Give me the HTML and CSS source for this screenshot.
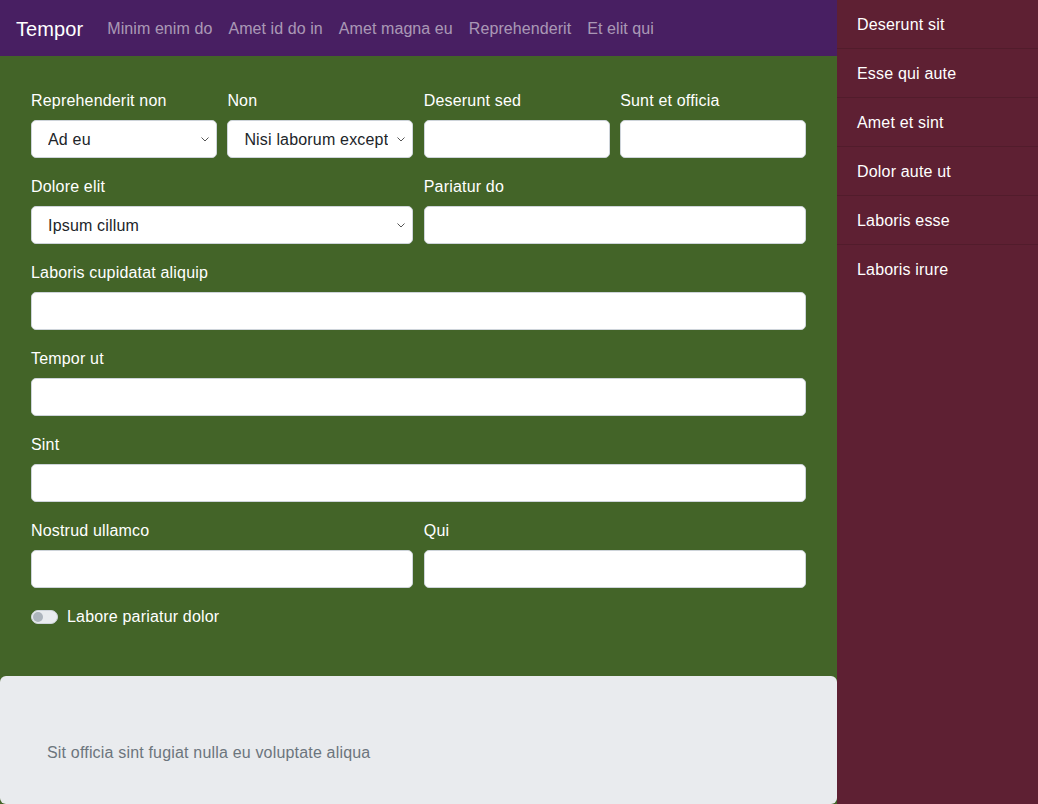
FILE: index.html
```html
<!DOCTYPE html>
<html lang="en">
<head>
<meta charset="utf-8">
<title>Tempor</title>
<link rel="stylesheet" href="styles.css">
</head>
<body>
<div class="layout">
  <div class="main">
    <nav class="navbar">
      <span class="brand">Tempor</span>
      <a class="nav-link" href="#">Minim enim do</a>
      <a class="nav-link" href="#">Amet id do in</a>
      <a class="nav-link" href="#">Amet magna eu</a>
      <a class="nav-link" href="#">Reprehenderit</a>
      <a class="nav-link" href="#">Et elit qui</a>
    </nav>
    <form class="form">
      <div class="field">
        <label>Reprehenderit non</label>
        <div class="select-wrap">
          <select class="control select"><option>Ad eu</option></select>
          <svg class="chev" width="8" height="5" viewBox="0 0 8 5"><path d="M0.5 0.5 L4 4 L7.5 0.5" fill="none" stroke="#555" stroke-width="1"/></svg>
        </div>
      </div>
      <div class="field">
        <label>Non</label>
        <div class="select-wrap">
          <select class="control select"><option>Nisi laborum excepteur</option></select>
          <svg class="chev" width="8" height="5" viewBox="0 0 8 5"><path d="M0.5 0.5 L4 4 L7.5 0.5" fill="none" stroke="#555" stroke-width="1"/></svg>
        </div>
      </div>
      <div class="field">
        <label>Deserunt sed</label>
        <input class="control" type="text">
      </div>
      <div class="field">
        <label>Sunt et officia</label>
        <input class="control" type="text">
      </div>
      <div class="field span2">
        <label>Dolore elit</label>
        <div class="select-wrap">
          <select class="control select"><option>Ipsum cillum</option></select>
          <svg class="chev" width="8" height="5" viewBox="0 0 8 5"><path d="M0.5 0.5 L4 4 L7.5 0.5" fill="none" stroke="#555" stroke-width="1"/></svg>
        </div>
      </div>
      <div class="field span2">
        <label>Pariatur do</label>
        <input class="control" type="text">
      </div>
      <div class="field span4">
        <label>Laboris cupidatat aliquip</label>
        <input class="control" type="text">
      </div>
      <div class="field span4">
        <label>Tempor ut</label>
        <input class="control" type="text">
      </div>
      <div class="field span4">
        <label>Sint</label>
        <input class="control" type="text">
      </div>
      <div class="field span2">
        <label>Nostrud ullamco</label>
        <input class="control" type="text">
      </div>
      <div class="field span2">
        <label>Qui</label>
        <input class="control" type="text">
      </div>
      <div class="switch-row span4">
        <span class="switch"><span class="knob"></span></span>
        <span class="switch-label">Labore pariatur dolor</span>
      </div>
    </form>
    <footer class="footer">
      <p>Sit officia sint fugiat nulla eu voluptate aliqua</p>
    </footer>
  </div>
  <aside class="sidebar">
    <a class="side-item" href="#">Deserunt sit</a>
    <a class="side-item" href="#">Esse qui aute</a>
    <a class="side-item" href="#">Amet et sint</a>
    <a class="side-item" href="#">Dolor aute ut</a>
    <a class="side-item" href="#">Laboris esse</a>
    <a class="side-item" href="#">Laboris irure</a>
  </aside>
</div>
</body>
</html>
```
FILE: styles.css
```css
* { box-sizing: border-box; }
html, body { margin: 0; padding: 0; height: 100%; }
body {
  font-family: "Liberation Sans", Arial, sans-serif;
  font-size: 16px;
  line-height: 24px;
  letter-spacing: 0.18px;
  color: #212529;
  background: #5e2033;
}
.layout {
  display: flex;
  height: 804px;
}
.main {
  width: 837px;
  background: #436428;
  display: flex;
  flex-direction: column;
}
.navbar {
  flex-shrink: 0;
  height: 56px;
  background: #481f62;
  display: flex;
  align-items: center;
  padding: 2px 16px 0;
}
.brand {
  color: #fff;
  font-size: 20px;
  line-height: 30px;
  margin-right: 16px;
  letter-spacing: 0.1px;
}
.nav-link {
  color: rgba(255,255,255,0.55);
  text-decoration: none;
  padding: 8px;
  letter-spacing: 0.08px;
}
.form {
  flex-shrink: 0;
  display: grid;
  grid-template-columns: repeat(4, 1fr);
  column-gap: 10.5px;
  row-gap: 16px;
  padding: 32px 31px 47px;
}
.field { display: flex; flex-direction: column; }
.span2 { grid-column: span 2; }
.span4 { grid-column: span 4; }
label {
  color: #fff;
  padding-top: 1px;
  margin-bottom: 7px;
}
.control {
  height: 38px;
  width: 100%;
  border: 1px solid #ced4da;
  border-radius: 5px;
  background: #fff;
  font-family: inherit;
  font-size: 16px;
  letter-spacing: 0.18px;
  color: #212529;
  padding: 6px 12px;
  margin: 0;
}
.select-wrap { position: relative; }
.select {
  appearance: none;
  -webkit-appearance: none;
  padding: 6px 24px 6px 16px;
}
.chev {
  position: absolute;
  right: 8px;
  top: 17px;
  pointer-events: none;
}
.switch-row {
  display: flex;
  align-items: center;
  gap: 9px;
  padding-top: 1px;
}
.switch {
  width: 27px;
  height: 14px;
  border-radius: 7px;
  background: #e9ecef;
  border: 1px solid #ced4da;
  display: flex;
  align-items: center;
  padding: 1px;
}
.knob {
  width: 10px;
  height: 10px;
  border-radius: 50%;
  background: #adb5bd;
}
.switch-label { color: #fff; }
.footer {
  flex: 1;
  background: #e9ebee;
  border-radius: 6px;
  padding: 65px 47px 39px;
}
.footer p {
  margin: 0;
  color: #6c757d;
}
.sidebar {
  flex: 1;
  background: #5e2033;
  display: flex;
  flex-direction: column;
}
.side-item {
  display: block;
  color: #fff;
  text-decoration: none;
  padding: 13px 20px 11px;
  border-top: 1px solid rgba(0,0,0,0.125);
}
.side-item:first-child { border-top: none; }
```
